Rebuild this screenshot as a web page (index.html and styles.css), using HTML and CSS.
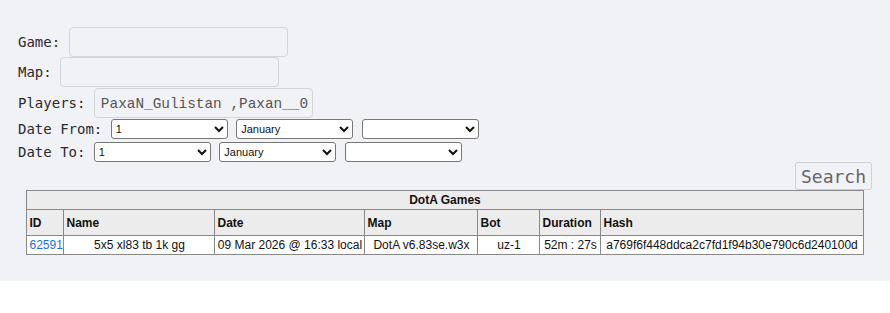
FILE: index.html
```html
<!DOCTYPE html>
<html lang="en">
<head>
    <meta charset="UTF-8">
    <meta name="viewport" content="width=device-width, initial-scale=1.0">
    <title>DotA Games</title>
    <link rel="stylesheet" href="styles.css">
</head>
<body>
    <div class="page">
        <form class="search-form">
            <div class="field">
                <label for="game">Game:</label>
                <input type="text" id="game" name="game">
            </div>
            <div class="field">
                <label for="map">Map:</label>
                <input type="text" id="map" name="map">
            </div>
            <div class="field">
                <label for="players">Players:</label>
                <input type="text" id="players" name="players" value="PaxaN_Gulistan ,Paxan__0">
            </div>
            <div class="date-row first">
                <label for="fromDay">Date From:</label>
                <select id="fromDay"><option>1</option></select>
                <select id="fromMonth"><option>January</option></select>
                <select id="fromYear"><option></option></select>
            </div>
            <div class="date-row">
                <label for="toDay">Date To:</label>
                <select id="toDay"><option>1</option></select>
                <select id="toMonth"><option>January</option></select>
                <select id="toYear"><option></option></select>
            </div>
            <div class="actions">
                <button type="button" class="btn">Search</button>
            </div>
        </form>

        <table class="games">
            <colgroup>
                <col style="width: 37px">
                <col style="width: 151px">
                <col style="width: 150px">
                <col style="width: 113px">
                <col style="width: 62px">
                <col style="width: 61px">
                <col style="width: 262px">
            </colgroup>
            <tr class="title-row">
                <th colspan="7">DotA Games</th>
            </tr>
            <tr class="head-row">
                <th>ID</th>
                <th>Name</th>
                <th>Date</th>
                <th>Map</th>
                <th>Bot</th>
                <th>Duration</th>
                <th>Hash</th>
            </tr>
            <tr class="data-row">
                <td><a href="#">62591</a></td>
                <td>5x5 xl83 tb 1k gg</td>
                <td>09 Mar 2026 @ 16:33 local</td>
                <td>DotA v6.83se.w3x</td>
                <td>uz-1</td>
                <td>52m : 27s</td>
                <td>a769f6f448ddca2c7fd1f94b30e790c6d240100d</td>
            </tr>
        </table>
    </div>
</body>
</html>
```

FILE: styles.css
```css
body {
    margin: 0;
    background: #fff;
    color: #2b2b2b;
    font-family: "DejaVu Sans Mono", monospace;
}

.page {
    background: #f1f2f6;
    padding: 27px 18px 26px;
}

.field, .date-row {
    display: flex;
    align-items: center;
    gap: 1ch;
    font-size: 14px;
}

.field {
    height: 30px;
    margin-bottom: 1px;
}

.field:first-child {
    margin-bottom: 0;
}

.field input {
    box-sizing: border-box;
    width: 219px;
    height: 30px;
    padding: 4px 2px 2px 6px;
    line-height: 22px;
    font-family: "Liberation Mono", monospace;
    font-size: 14.4px;
    color: #555;
    background: #f1f2f6;
    border: 1px solid #d4d5d9;
    border-radius: 4px;
}

.date-row {
    height: 20px;
    margin-top: 3px;
}

.date-row.first {
    margin-top: 1px;
}

.date-row select {
    box-sizing: border-box;
    width: 117px;
    height: 20px;
    font-family: "Liberation Sans", sans-serif;
    font-size: 11px;
    color: #111;
    background: #fff;
    border: 1px solid #777;
    border-radius: 3px;
}

.actions {
    display: flex;
    justify-content: flex-end;
}

.btn {
    box-sizing: border-box;
    width: 77px;
    height: 28px;
    padding: 0;
    font-family: "DejaVu Sans Mono", monospace;
    font-size: 18px;
    color: #666;
    background: #f1f2f6;
    border: 1px solid #cfd0d4;
    border-radius: 3px;
}

.games {
    margin: 0 auto;
    border-collapse: collapse;
    table-layout: fixed;
    width: 837px;
    font-family: "Liberation Sans", Arial, sans-serif;
    font-size: 12px;
    color: #111;
    border: 1px solid #888;
}

.games th, .games td {
    border: 1px solid #888;
    padding: 0 2px;
    white-space: nowrap;
    overflow: hidden;
}

.title-row th {
    height: 18px;
    background: #ececec;
    text-align: center;
}

.head-row th {
    height: 25px;
    background: #ececec;
    text-align: left;
}

.data-row td {
    height: 18px;
    background: #fff;
    text-align: center;
}

.data-row a {
    color: #1a6fdc;
    text-decoration: none;
}
```
